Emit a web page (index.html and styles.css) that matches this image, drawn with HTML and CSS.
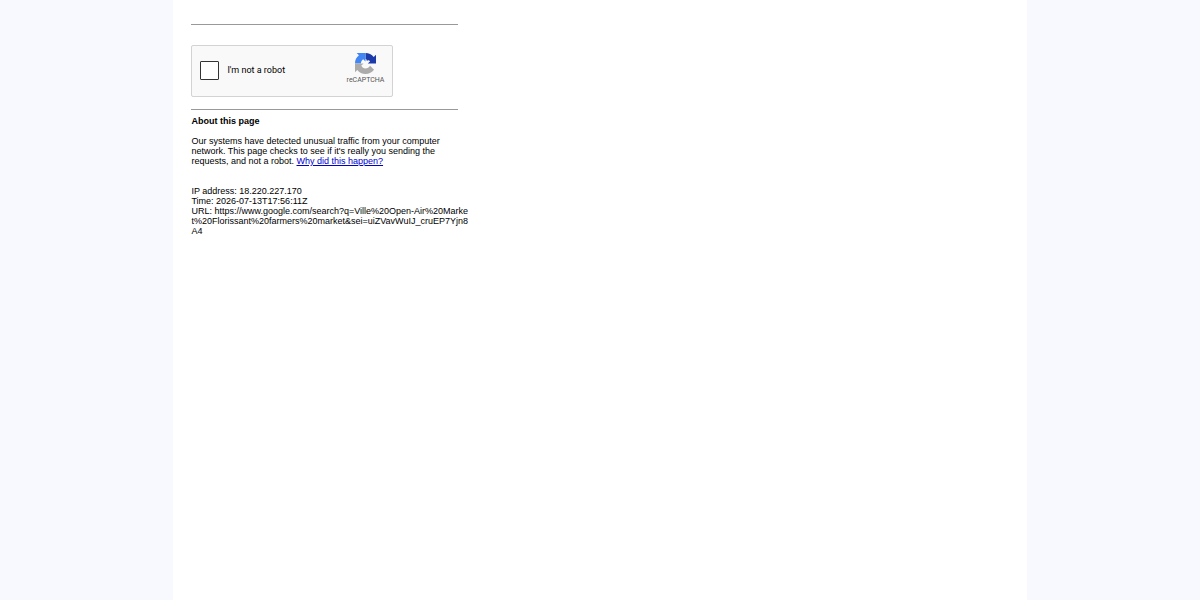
FILE: index.html
```html
<!DOCTYPE html>
<html lang="en">
<head>
  <meta charset="UTF-8">
  <meta name="viewport" content="width=device-width, initial-scale=1">
  <title>About this page</title>
  <link rel="stylesheet" href="styles.css">
</head>
<body>
  <main class="page">
    <div class="content">
      <hr class="divider">

      <form class="captcha">
        <input type="checkbox" id="robot" class="captcha-box">
        <label for="robot" class="captcha-label">I'm not a robot</label>
        <div class="captcha-brand">
          <svg class="captcha-logo" viewBox="0 0 64 64" aria-hidden="true">
            <path fill="#1c3aa9" d="M64 32V5l-7 7C51 4 42 0 32 0v18c3 0 4 3 4 6 3-3 8-2 10 1l-7 7z"/>
            <path fill="#4285f4" d="M32 0H5l7 7C4 13 0 22 0 32h18c0-6 3-10 7-13l7 7z"/>
            <path fill="#ababab" d="M0 32v27l7-7c6 8 15 12 25 12 11 0 20-5 26-13L46 39c-3 5-8 8-14 8s-10-3-13-8l7-7z"/>
          </svg>
          <span class="captcha-name">reCAPTCHA</span>
        </div>
      </form>

      <hr class="divider">

      <div class="about">
        <b>About this page</b>
        <p>Our systems have detected unusual traffic from your computer network. This page checks to see if it's really you sending the requests, and not a robot. <a href="#">Why did this happen?</a></p>
      </div>

      <div class="details">
        IP address: 18.220.227.170<br>
        Time: 2026-07-13T17:56:11Z<br>
        URL: https://www.google.com/search?q=Ville%20Open-Air%20Market%20Florissant%20farmers%20market&amp;sei=uiZVavWuIJ_cruEP7Yjn8A4
      </div>
    </div>
  </main>
</body>
</html>
```

FILE: styles.css
```css
body {
  margin: 0;
  background: #f7f9fe;
  color: #000;
  font-family: "Liberation Sans", Arial, sans-serif;
  font-size: 9px;
  line-height: 10px;
}

.page {
  box-sizing: border-box;
  width: 71.1%;
  min-height: 100vh;
  margin: 0 auto;
  padding: 24px 18px;
  background: #fff;
}

.content {
  max-width: 279px;
}

.divider {
  max-width: 267px;
  height: 1px;
  margin: 0;
  border: 0;
  background: #999;
}

.captcha {
  display: flex;
  align-items: center;
  box-sizing: border-box;
  width: 202px;
  height: 52px;
  margin: 20px 0 12px;
  padding: 0 8px 2px;
  border: 1px solid #d3d3d3;
  border-radius: 2px;
  background: #f9f9f9;
}

.captcha-box {
  appearance: none;
  box-sizing: border-box;
  width: 19px;
  height: 19px;
  margin: 0 8px 0 0;
  border: 1px solid #333;
  border-radius: 1px;
  background: #fff;
}

.captcha-box:checked {
  background: #4285f4;
}

.captcha-label {
  font-family: Roboto, Arial, sans-serif;
  font-size: 9px;
}

.captcha-brand {
  display: flex;
  flex-direction: column;
  align-items: center;
  gap: 1px;
  margin-left: auto;
  padding-bottom: 2px;
}

.captcha-logo {
  width: 21px;
  height: 21px;
}

.captcha-name {
  color: #555;
  font-family: Roboto, Arial, sans-serif;
  font-size: 7px;
}

.about {
  padding-top: 6px;
}

.about p {
  margin: 10px 0 20px;
}

.about a {
  color: #0000cc;
}

.details {
  word-break: break-all;
}
```
